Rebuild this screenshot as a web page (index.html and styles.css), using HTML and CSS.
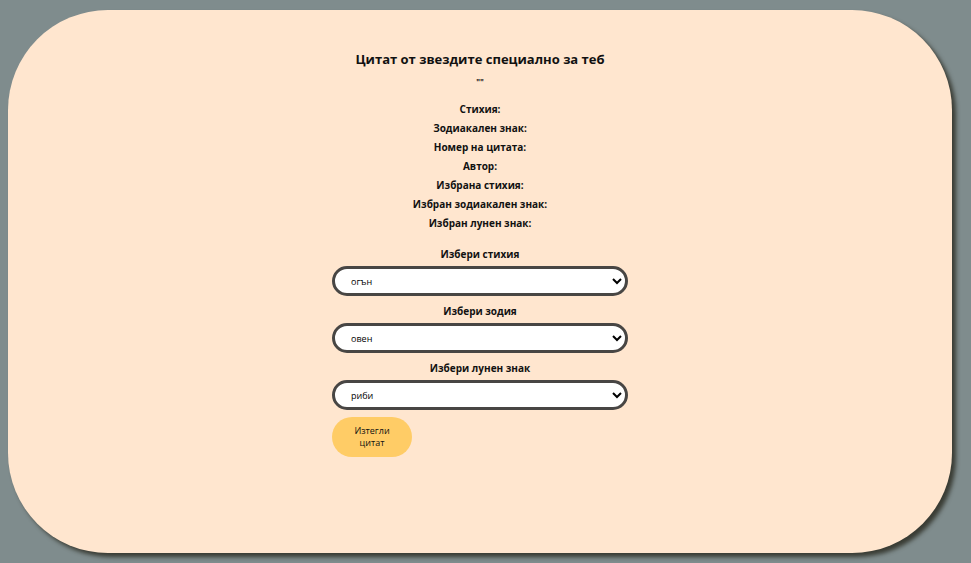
FILE: index.html
```html
<!DOCTYPE html>
<html lang="bg">
<head>
<meta charset="utf-8">
<title>Цитат</title>
<link rel="stylesheet" href="styles.css">
</head>
<body>
<main class="card">
  <h1 class="title">Цитат от звездите специално за теб</h1>
  <p class="quote">""</p>
  <div class="info">
    <p>Стихия:</p>
    <p>Зодиакален знак:</p>
    <p>Номер на цитата:</p>
    <p>Автор:</p>
    <p>Избрана стихия:</p>
    <p>Избран зодиакален знак:</p>
    <p>Избран лунен знак:</p>
  </div>
  <form class="form">
    <label class="label" for="el">Избери стихия</label>
    <select id="el" class="select"><option>огън</option></select>
    <label class="label" for="zod">Избери зодия</label>
    <select id="zod" class="select"><option>овен</option></select>
    <label class="label" for="moon">Избери лунен знак</label>
    <select id="moon" class="select"><option>риби</option></select>
    <button type="button" class="btn">Изтегли цитат</button>
  </form>
</main>
</body>
</html>
```
FILE: styles.css
```css
html, body { margin: 0; padding: 0; }
body {
  background: #7f8c8d;
  font-family: "Open Sans", "DejaVu Sans", sans-serif;
  color: #111;
  padding: 10px 18px 10px 8px;
  height: 563px;
  box-sizing: border-box;
}
.card {
  background: #ffe6cf;
  border-radius: 100px;
  box-shadow: 4px 4px 4px rgba(40, 40, 30, 0.8);
  height: 543px;
  width: 944px;
  box-sizing: border-box;
  padding-top: 33px;
  display: flex;
  flex-direction: column;
  align-items: center;
}
.title {
  margin: 0;
  font-size: 13px;
  font-weight: 700;
  line-height: 32px;
}
.quote {
  margin: 2px 0 0;
  font-size: 8px;
  line-height: 10px;
  font-weight: 700;
  color: #111;
}
.info { margin-top: 13px; text-align: center; }
.info p {
  margin: 0;
  font-size: 10px;
  font-weight: 700;
  line-height: 19px;
}
.form {
  margin-top: 13px;
  width: 296px;
  display: flex;
  flex-direction: column;
  align-items: center;
}
.label {
  font-size: 10px;
  font-weight: 700;
  line-height: 16px;
  margin-bottom: 4px;
}
.select {
  width: 296px;
  height: 30px;
  border: 3px solid #484644;
  border-radius: 15px;
  background: #fff;
  font-family: "Open Sans", "DejaVu Sans", sans-serif;
  font-size: 9px;
  padding: 0 12px;
  margin-bottom: 7px;
  color: #000;
}
.btn {
  align-self: flex-start;
  margin-top: 0;
  width: 80px;
  height: 40px;
  border: none;
  border-radius: 20px;
  background: #ffcc66;
  font-family: "Open Sans", "DejaVu Sans", sans-serif;
  font-size: 9px;
  line-height: 12px;
  padding: 0 18px;
  color: #111;
}
```
